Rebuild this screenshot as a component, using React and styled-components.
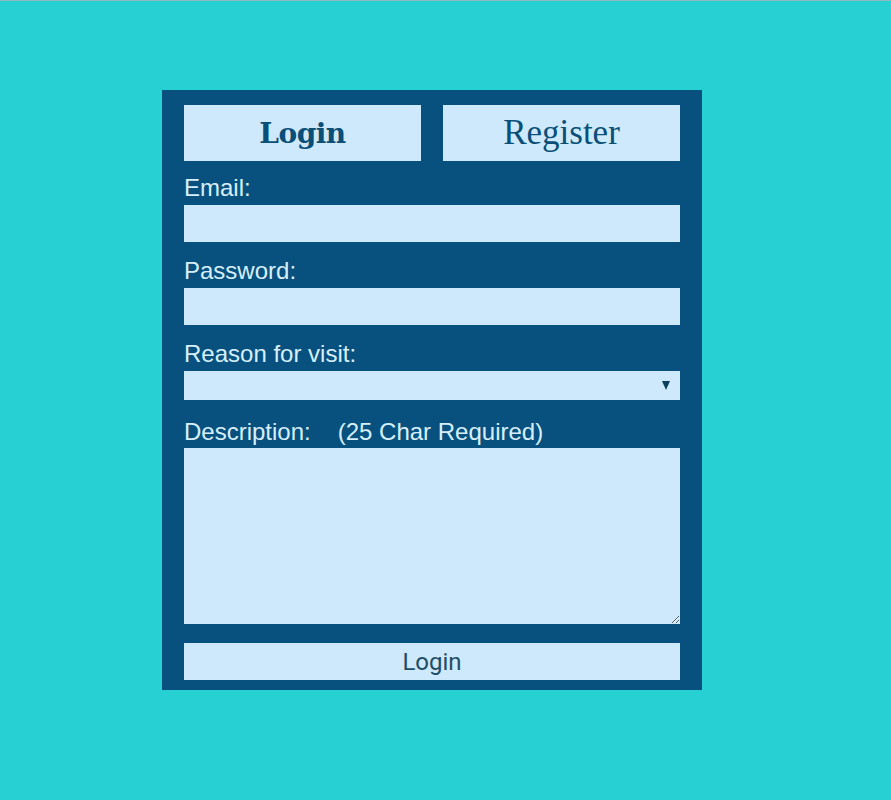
import React from "react";
import styled, { createGlobalStyle } from "styled-components";

const Global = createGlobalStyle`
  html, body { margin: 0; padding: 0; }
  body {
    background: #26d0d3;
    border-top: 1px solid #8fb9bd;
    min-height: 799px;
    font-family: "Liberation Sans", Arial, sans-serif;
  }
`;

const Page = styled.div`
  display: flex;
  justify-content: flex-start;
  padding: 89px 0 0 162px;
`;

const Panel = styled.form`
  width: 540px;
  box-sizing: border-box;
  background: #08517f;
  padding: 15px 22px 10px;
  display: flex;
  flex-direction: column;
`;

const Tabs = styled.div`
  display: grid;
  grid-template-columns: 1fr 1fr;
  gap: 22px;
  margin-bottom: 13px;
`;

const Tab = styled.button`
  height: 56px;
  border: none;
  background: #cde9fb;
  color: #0a4f78;
  padding: 0;
  cursor: pointer;
  font-family: ${(p) =>
    p.$active ? `"DejaVu Serif", "Liberation Serif", serif` : `"Liberation Serif", serif`};
  font-size: ${(p) => (p.$active ? "28px" : "35px")};
  font-weight: ${(p) => (p.$active ? 700 : 400)};
  letter-spacing: ${(p) => (p.$active ? "-0.5px" : "0")};
`;

const Label = styled.label`
  display: block;
  color: #d6effb;
  font-size: 24px;
  line-height: 27px;
  margin-bottom: ${(p) => p.$mb ?? 4}px;
`;

const Note = styled.span`
  margin-left: 27px;
`;

const Input = styled.input`
  display: block;
  box-sizing: border-box;
  width: 100%;
  height: 37px;
  border: none;
  background: #cde9fb;
  margin-bottom: 15px;
  padding: 0 8px;
  font-size: 18px;
  outline: none;
`;

const SelectWrap = styled.div`
  position: relative;
  margin-bottom: 18px;
`;

const Select = styled.select`
  display: block;
  box-sizing: border-box;
  width: 100%;
  height: 29px;
  border: none;
  border-radius: 0;
  background: #cde9fb;
  appearance: none;
  -webkit-appearance: none;
  outline: none;
  font-size: 16px;
`;

const Arrow = styled.span`
  position: absolute;
  right: 10px;
  top: 10px;
  width: 0;
  height: 0;
  border-left: 4.5px solid transparent;
  border-right: 4.5px solid transparent;
  border-top: 9px solid #0d3f5c;
  pointer-events: none;
`;

const TextArea = styled.textarea`
  display: block;
  box-sizing: border-box;
  width: 100%;
  height: 176px;
  border: none;
  background: #cde9fb;
  margin: 0 0 19px;
  outline: none;
  font-size: 16px;
`;

const Submit = styled.button`
  height: 37px;
  border: none;
  background: #cde9fb;
  color: #1e4d66;
  font-family: Roboto, "Liberation Sans", sans-serif;
  font-size: 24px;
  padding: 0;
  cursor: pointer;
`;

export default function App() {
  return (
    <>
      <Global />
      <Page>
        <Panel onSubmit={(e) => e.preventDefault()}>
          <Tabs>
            <Tab type="button" $active>Login</Tab>
            <Tab type="button">Register</Tab>
          </Tabs>
          <Label>Email:</Label>
          <Input type="email" />
          <Label>Password:</Label>
          <Input type="password" />
          <Label>Reason for visit:</Label>
          <SelectWrap>
            <Select defaultValue="">
              <option value=""></option>
            </Select>
            <Arrow />
          </SelectWrap>
          <Label $mb={3}>
            Description:<Note>(25 Char Required)</Note>
          </Label>
          <TextArea />
          <Submit type="submit">Login</Submit>
        </Panel>
      </Page>
    </>
  );
}
